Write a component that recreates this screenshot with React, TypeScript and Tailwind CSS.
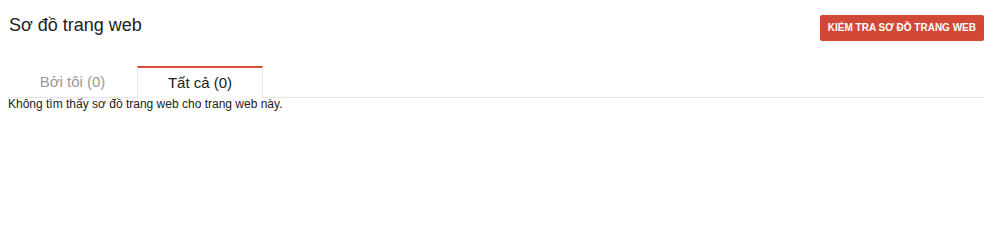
export default function App() {
  return (
    <main className="min-h-screen bg-white pl-2 pr-4 font-['Liberation_Sans',Arial,sans-serif] text-[#222]">
      {/* Header: title + action */}
      <div className="flex items-start justify-between pt-[13px]">
        <h1 className="pl-px text-[18px] leading-6 font-normal text-[#222]">
          Sơ đồ trang web
        </h1>
        <button className="mt-[2px] h-[26px] rounded-[2px] bg-[#d14836] px-2 text-[10px] leading-[26px] font-bold text-white">
          KIỂM TRA SƠ ĐỒ TRANG WEB
        </button>
      </div>

      {/* Tabs */}
      <div className="mt-[24px] flex items-end border-b border-[#e5e5e5]">
        <div className="w-[129px] pt-[7px] pb-[5px] text-center text-[15px] leading-5 text-[#999]">
          Bởi tôi (0)
        </div>
        <div className="-mb-px w-[126px] border-x border-t-2 border-x-[#e5e5e5] border-t-[#dd4b39] bg-white pt-[5px] pb-[5px] text-center text-[15px] leading-5 text-[#222]">
          Tất cả (0)
        </div>
      </div>

      <p className="text-[12px] leading-[13px] text-[#222]">
        Không tìm thấy sơ đồ trang web cho trang web này.
      </p>
    </main>
  )
}
